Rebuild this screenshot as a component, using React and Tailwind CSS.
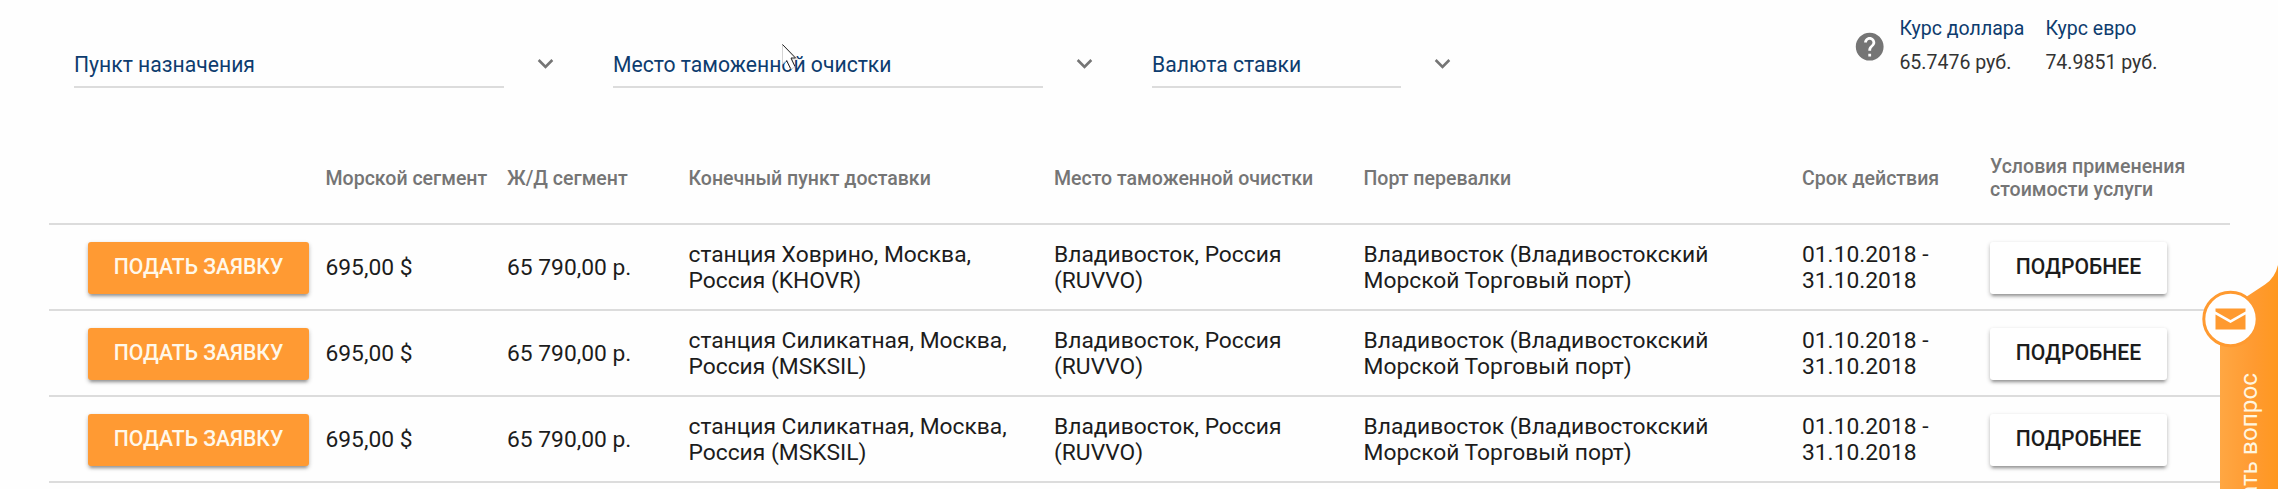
import React from "react";
import { MdExpandMore, MdHelp } from "react-icons/md";

const filters = [
  { label: "Пункт назначения", box: "w-[539px]", line: "w-[430px]" },
  { label: "Место таможенной очистки", box: "w-[539px]", line: "w-[430px]" },
  { label: "Валюта ставки", box: "w-[400px]", line: "w-[249px]" },
];

const rates = [
  { label: "Курс доллара", value: "65.7476 руб.", width: "w-[146px]" },
  { label: "Курс евро", value: "74.9851 руб.", width: "w-[140px]" },
];

const columns = [
  "",
  "Морской сегмент",
  "Ж/Д сегмент",
  "Конечный пункт доставки",
  "Место таможенной очистки",
  "Порт перевалки",
  "Срок действия",
];

const rows = [
  { station: "станция Ховрино, Москва,", code: "Россия (KHOVR)" },
  { station: "станция Силикатная, Москва,", code: "Россия (MSKSIL)" },
  { station: "станция Силикатная, Москва,", code: "Россия (MSKSIL)" },
];

const grid =
  "grid grid-cols-[276.5px_181.5px_181.5px_365.5px_309.5px_438.5px_188px_1fr] items-center border-b-2 border-[#dcdcdc]";

const shadow = "shadow-[0_2px_4px_rgba(0,0,0,0.28),0_4px_3px_-2px_rgba(0,0,0,0.22)]";

function Filter({ label, box, line }) {
  return (
    <div className={`flex shrink-0 ${box}`}>
      <div className={`h-[40px] border-b-2 border-[#dcdcdc] pt-[4px] text-[21.15px] leading-[26px] whitespace-nowrap text-[#0d3c6e] ${line}`}>
        {label}
      </div>
      <MdExpandMore className="ml-[26px] size-[31px] text-[#757575]" />
    </div>
  );
}

function Cursor() {
  return (
    <svg className="absolute top-[43px] left-[781px] h-[30px] w-[22px]" viewBox="0 0 22 30" fill="none">
      <path d="M1.5 1.5V21L6 17l4 9 4-2-4-8h6.500z" fill="#fff" stroke="#d4d4d4" strokeWidth="1" />
      <path d="M1.500 1.500 14.500 15H10l4 8.500M5.500 17.500l4 8" stroke="#222" strokeWidth="1" />
    </svg>
  );
}

function AskTab() {
  return (
    <div className="absolute top-[262px] right-0 h-[227px] w-[78px] overflow-hidden">
      <svg className="h-[227px] w-[78px]" viewBox="0 0 78 227">
        <defs>
          <linearGradient id="tab" x1="0" x2="1" y1="0" y2="0">
            <stop offset="0" stopColor="#ffa743" />
            <stop offset="0.6" stopColor="#ff9a30" />
            <stop offset="1" stopColor="#ff981f" />
          </linearGradient>
        </defs>
        <path d="M20 227V57L46 50L43 37L65 22.500Q75 16 78 3V227Z" fill="url(#tab)" />
        <circle cx="30.500" cy="57" r="26.700" fill="#fff" stroke="#ff9a30" strokeWidth="3" />
        <path d="M15.500 46.500h30v3l-15 8.500-15-8.500z" fill="#ff9a30" />
        <path d="M15.500 52.500l15 8.500 15-8.500v15h-30z" fill="#ff9a30" />
      </svg>
      <div className="absolute top-[111px] left-[35px] rotate-180 text-[24.3px] leading-[28px] whitespace-nowrap text-[#fff6e0] [writing-mode:vertical-rl]">
        Задать вопрос
      </div>
    </div>
  );
}

export default function App() {
  return (
    <div className="relative h-[489px] w-[2278px] overflow-hidden bg-[#fefefe] font-['Roboto',sans-serif] text-black">
      <header className="flex h-[132px] pl-[74px]">
        <div className="flex pt-[48px]">
          {filters.map((f) => (
            <Filter key={f.label} {...f} />
          ))}
        </div>
        <MdHelp className="mt-[30px] ml-[301px] size-[33.4px] shrink-0 text-[#757575]" />
        <div className="ml-[13px] flex pt-[16px] text-[19.55px] whitespace-nowrap">
          {rates.map((r) => (
            <div key={r.label} className={r.width}>
              <div className="leading-[26px] text-[#0d3c6e]">{r.label}</div>
              <div className="mt-[8px] leading-[26px] text-[#333]">{r.value}</div>
            </div>
          ))}
        </div>
      </header>

      <main className="ml-[49px] w-[2181px]">
        <div className={`${grid} h-[93px] pt-[1px] text-[19.55px] leading-[23px] font-medium whitespace-nowrap text-[#757575]`}>
          {columns.map((c, i) => (
            <div key={i}>{c}</div>
          ))}
          <div>
            Условия применения
            <br />
            стоимости услуги
          </div>
        </div>
        {rows.map((r, i) => (
          <div key={i} className={`${grid} h-[86px] pt-[1px] text-[22.8px] leading-[25.6px] whitespace-nowrap text-[#1c1c1c]`}>
            <div className="pl-[39px]">
              <button className={`block h-[52px] w-[221px] rounded-[3px] bg-[#ff9a33] pb-[2px] text-[21.15px] font-medium text-[#fff8ea] ${shadow}`}>
                ПОДАТЬ ЗАЯВКУ
              </button>
            </div>
            <div>695,00 $</div>
            <div>65 790,00 р.</div>
            <div>
              {r.station}
              <br />
              {r.code}
            </div>
            <div>
              Владивосток, Россия
              <br />
              (RUVVO)
            </div>
            <div>
              Владивосток (Владивостокский
              <br />
              Морской Торговый порт)
            </div>
            <div>
              01.10.2018 -
              <br />
              31.10.2018
            </div>
            <div>
              <button className={`block h-[52px] w-[177px] rounded-[3px] bg-white pb-[2px] text-[21.15px] font-medium ${shadow}`}>
                ПОДРОБНЕЕ
              </button>
            </div>
          </div>
        ))}
      </main>
      <Cursor />
      <AskTab />
    </div>
  );
}
